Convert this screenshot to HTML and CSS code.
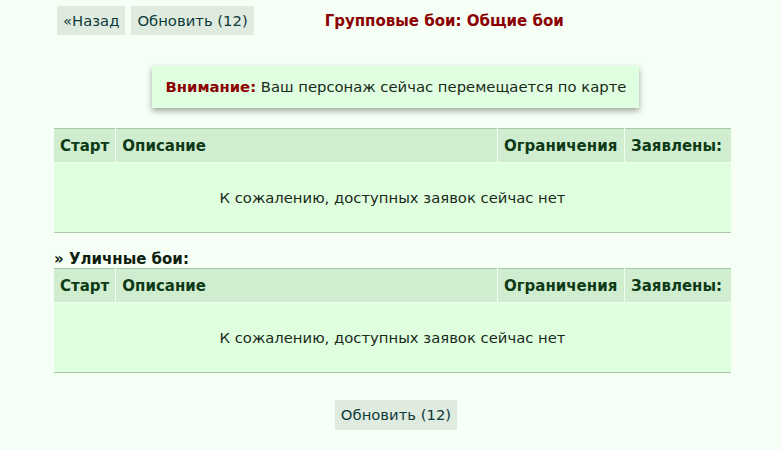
FILE: index.html
```html
<!DOCTYPE html>
<html>

<head>
  <meta charset="utf-8">
  <link rel="stylesheet" href="styles.css">
</head>

<body>
  <div class="topbar">
    <span class="btn">«Назад</span>
    <span class="btn">Обновить (12)</span>
    <h1 class="title">Групповые бои: Общие бои</h1>
  </div>

  <div class="notice-wrap">
    <div class="notice"><b>Внимание:</b> Ваш персонаж сейчас перемещается по карте</div>
  </div>

  <table class="battles">
    <tr>
      <th class="c-start">Старт</th>
      <th class="c-desc">Описание</th>
      <th class="c-lim">Ограничения</th>
      <th class="c-join">Заявлены:</th>
    </tr>
    <tr>
      <td colspan="4" class="empty">К сожалению, доступных заявок сейчас нет</td>
    </tr>
  </table>

  <div class="section">» Уличные бои:</div>
  <table class="battles">
    <tr>
      <th class="c-start">Старт</th>
      <th class="c-desc">Описание</th>
      <th class="c-lim">Ограничения</th>
      <th class="c-join">Заявлены:</th>
    </tr>
    <tr>
      <td colspan="4" class="empty">К сожалению, доступных заявок сейчас нет</td>
    </tr>
  </table>

  <div class="bottom">
    <span class="btn">Обновить (12)</span>
  </div>
</body>

</html>
```

FILE: styles.css
```css
/* ---------- page ---------- */
body {
  margin: 0;
  padding: 6px 50px 0 54px;
  background-color: #f6fff6;
  font-family: "DejaVu Sans", Verdana, sans-serif;
  font-size: 14.8px;
  color: #1a2a1a;
}

.btn {
  display: inline-block;
  height: 29px;
  line-height: 29px;
  padding: 0 6px;
  background-color: #e0ebe0;
  color: #0e3a3a;
}

.topbar {
  display: flex;
  align-items: center;
  gap: 6px;
  margin-left: 3px;
}

.title {
  margin: 0 0 0 65px;
  font-size: 15px;
  font-weight: bold;
  color: #8b0000;
}

/* ---------- notice ---------- */
.notice-wrap {
  display: flex;
  justify-content: center;
  padding: 31px 0 20px 6px;
}

.notice {
  background-color: #e0ffe0;
  padding: 12px 13px 13px 14px;
  box-shadow: 0 3px 6px rgba(0, 0, 0, 0.35);
}

.notice b {
  color: #8b0000;
}

/* ---------- tables ---------- */
.battles {
  width: 677px;
  border-collapse: collapse;
  border-top: 1px solid #a8c8a8;
  border-bottom: 1px solid #a8c8a8;
}

.battles th {
  height: 33px;
  padding: 0 6px;
  background-color: #d0edd0;
  color: #0e3a16;
  font-size: 15px;
  text-align: left;
  border-left: 1px solid #f0fff0;
}

.battles th:first-child {
  border-left: none;
}

.c-start { width: 48px; }
.c-lim { width: 114px; }
.c-join { width: 94px; }

.battles td.empty {
  height: 69px;
  padding: 0;
  text-align: center;
  background-color: #e0ffdf;
  border-top: 1px solid #f0fff0;
}

.section {
  margin-top: 18px;
  font-weight: bold;
  font-size: 15px;
  color: #0e1e0e;
  line-height: 17px;
}

.bottom {
  display: flex;
  justify-content: center;
  padding-top: 27px;
  margin-left: 7px;
}

.bottom .btn {
  height: 30px;
  line-height: 30px;
}
```
